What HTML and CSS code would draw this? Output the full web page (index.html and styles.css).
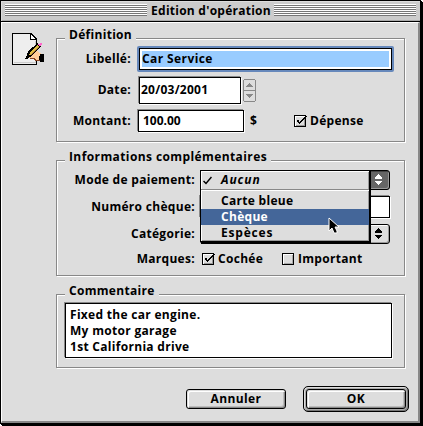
FILE: index.html
```html
<!DOCTYPE html>
<html lang="fr">
<head>
<meta charset="utf-8">
<title>Edition d'opération</title>
<link rel="stylesheet" href="styles.css">
</head>
<body>
<main class="window">
  <header class="titlebar"><i class="stripes"></i><h1>Edition d'opération</h1><i class="stripes"></i></header>
  <div class="content">
    <svg class="doc-icon" width="34" height="34" viewBox="0 0 34 34" shape-rendering="crispEdges">
      <path d="M0 0H19L25 6V32H0Z" fill="#000"/>
      <path d="M1 1H18V7H24V31H1Z" fill="#eee"/>
      <path d="M19 2L23 6H19Z" fill="#fff"/>
      <path d="M2 30H24V8H23V29H2Z" fill="#ccc"/>
      <path d="M19 18H25L27 20H29V27H23L20 26L15 24V21Z" fill="#fc9"/>
      <path d="M18 25H22L24 27H28V28H23L21 26H18Z" fill="#842"/>
      <path d="M28 21H32V29H28V27H27V23H28Z" fill="#000"/>
      <path d="M14 24.5L16 18.5L25.5 10L29.5 13.5L20 22.5L15.5 26Z" fill="#000"/>
      <path d="M17 22L18 19.5L25.5 12L27.5 13.5L19 21.5Z" fill="#db4"/>
      <path d="M18 22L27 13.5L27.5 14L20 21.5Z" fill="#963"/>
      <path d="M26 11H28V10H30V12H29V13H27V12H26Z" fill="#f6c"/>
      <path d="M13 25H14V24H15V23H16V25H15V26H13Z" fill="#000"/>
    </svg>
    <section class="group definition">
      <h2><span>Définition</span></h2>
      <div class="row row-name"><label>Libellé:</label><div class="focus"><div class="selected">Car Service</div></div></div>
      <div class="row row-date"><label>Date:</label><div class="field date">20/03/2001</div>
        <svg class="spinner" width="13" height="23" viewBox="0 0 13 23" shape-rendering="crispEdges"><path d="M1.5.5H11.5L12.5 1.5V21.5L11.5 22.5H1.5L.5 21.5V1.5ZM1 11.5H12" fill="none" stroke="#888"/><path d="M6 4H7V5H8V6H9V7H10V8H3V7H4V6H5V5H6ZM3 15H10V16H9V17H8V18H7V19H6V18H5V17H4V16H3Z" fill="#888"/></svg>
      </div>
      <div class="row row-amount"><label>Montant:</label><div class="field amount">100.00</div><span class="currency">$</span>
        <svg class="check" width="14" height="12" viewBox="0 0 14 12" shape-rendering="crispEdges"><path d="M.5.5H11.5V11.5H.5Z" fill="#ddd" stroke="#000"/><path d="M1 1H11V2H2V11H1Z" fill="#fff"/><path d="M10 2H11V11H2V10H10Z" fill="#999"/><path d="M3 5H5V7H6V6H7V5H8V4H9V3H10V2H11V1H13V2H12V3H11V4H10V5H9V6H8V7H7V8H6V9H5V8H4V7H3Z"/></svg><span class="check-label">Dépense</span>
      </div>
    </section>
    <section class="group details">
      <h2><span>Informations complémentaires</span></h2>
      <div class="row row-mode"><label>Mode de paiement:</label>
        <div class="popup dark"><svg width="7" height="12" viewBox="0 0 7 12" shape-rendering="crispEdges"><path d="M3 0H4V1H5V2H6V3H7V5H0V3H1V2H2V1H3ZM0 7H7V8H6V9H5V10H4V11H3V10H2V9H1V8H0Z"/></svg>
          <div class="menu">
            <div class="item current"><svg width="9" height="9" viewBox="0 0 9 9"><path d="M.5 5L3 7.5L8.5 1" fill="none" stroke="#000" stroke-width="1.5"/></svg><span>Aucun</span></div>
            <hr>
            <div class="item"><span>Carte bleue</span></div>
            <div class="item hover"><span>Chèque</span></div>
            <div class="item last"><span>Espèces</span></div>
            <svg class="cursor" width="13" height="18" viewBox="0 0 13 18"><path d="M1 1V14L4 11L6 16H9V14L7 10H11Z" stroke="#fff"/></svg>
          </div>
        </div>
      </div>
      <div class="row row-number"><label>Numéro chèque:</label><div class="field number"></div></div>
      <div class="row row-category"><label>Catégorie:</label><div class="popup"><svg width="7" height="12" viewBox="0 0 7 12" shape-rendering="crispEdges"><path d="M3 0H4V1H5V2H6V3H7V5H0V3H1V2H2V1H3ZM0 7H7V8H6V9H5V10H4V11H3V10H2V9H1V8H0Z"/></svg></div></div>
      <div class="row row-marks"><label>Marques:</label>
        <svg class="check" width="14" height="12" viewBox="0 0 14 12" shape-rendering="crispEdges"><path d="M.5.5H11.5V11.5H.5Z" fill="#ddd" stroke="#000"/><path d="M1 1H11V2H2V11H1Z" fill="#fff"/><path d="M10 2H11V11H2V10H10Z" fill="#999"/><path d="M3 5H5V7H6V6H7V5H8V4H9V3H10V2H11V1H13V2H12V3H11V4H10V5H9V6H8V7H7V8H6V9H5V8H4V7H3Z"/></svg><span class="check-label checked-label">Cochée</span>
        <svg class="check" width="14" height="12" viewBox="0 0 14 12" shape-rendering="crispEdges"><path d="M.5.5H11.5V11.5H.5Z" fill="#ddd" stroke="#000"/><path d="M1 1H11V2H2V11H1Z" fill="#fff"/><path d="M10 2H11V11H2V10H10Z" fill="#aaa"/></svg><span class="check-label">Important</span>
      </div>
    </section>
    <section class="group comment">
      <h2><span>Commentaire</span></h2>
      <div class="field notes"><p>Fixed the car engine.</p><p>My motor garage</p><p>1st California drive</p></div>
    </section>
    <footer class="actions"><button class="button">Annuler</button><div class="default"><button class="button">OK</button></div></footer>
  </div>
</main>
</body>
</html>
```
FILE: styles.css
```css
* { box-sizing: border-box; }
body { margin: 0; width: 423px; height: 426px; overflow: hidden; background: #fff; color: #000; font: 700 12px/16px "Open Sans", sans-serif; letter-spacing: .3px; white-space: nowrap; }
h1, h2, p { margin: 0; font: inherit; }
svg { display: block; flex: none; }
.window { width: 421px; height: 424px; border: 1px solid #000; background: #ddd; box-shadow: 1px 1px #000, 2px 2px #000; }
.titlebar { height: 21px; padding: 3px 4px 0; display: flex; background: #ccc; border-bottom: 1px solid #000; box-shadow: inset 1px 1px #ddd, inset 0 -1px #aaa; }
.titlebar h1 { width: 127px; text-align: center; margin-top: -1px; letter-spacing: .25px; padding-left: 1px; }
.stripes { flex: 1; height: 12px; background: repeating-linear-gradient(#fff 0 1px, #777 1px 2px); }
.content { height: 401px; display: grid; grid-template: 104px 116px 74px 1fr / 55px 349px; row-gap: 18px; padding-top: 15px; border: solid; border-width: 1px 2px 2px 1px; border-color: #fff #888 #888 #fff; }
.doc-icon { margin: -5px 0 0 10px; }
.group { grid-column: 2; border: 1px solid #888; box-shadow: inset 1px 1px #fff, 1px 1px #fff; display: flex; flex-direction: column; margin-left: -1px; width: 349px; }
.group h2 { margin: -12px 0 0 8px; height: 16px; flex: none; align-self: flex-start; background: #ddd; padding: 0 4px; }
.details h2 { letter-spacing: .4px; }
.row { display: flex; align-items: center; flex: none; }
.row label { text-align: right; flex: none; }
.definition label { width: 74px; }
.details label { width: 138px; }
.row-name { height: 26px; margin-top: 3px; }
.focus { margin-left: 6px; width: 257px; height: 26px; padding: 2px; background: #68b; border-radius: 2px; }
.selected { height: 22px; border: 1px solid #000; background: #9cf; box-shadow: inset 0 0 0 2px #fff; padding: 2px 0 0 2px; letter-spacing: .4px; }
.field { background: #fff; border: 1px solid #000; box-shadow: -1px -1px #888, 1px 1px #fff; }
.row-date { height: 27px; margin-top: 5px; }
.date { margin-left: 8px; width: 102px; height: 27px; padding: 4px 0 0 1px; letter-spacing: .25px; }
.row-date label { position: relative; top: -1px; }
.spinner { margin-left: 2px; }
.row-amount { height: 22px; margin-top: 6px; }
.amount { margin-left: 7px; width: 106px; height: 22px; padding: 2px 0 0 4px; letter-spacing: 0; }
.currency { width: 50px; padding-left: 6px; }
.check-label { margin-left: 2px; }
.row-mode { height: 20px; margin-top: 5px; }
.popup { position: relative; width: 190px; height: 20px; margin-left: 5px; border: 1px solid #000; border-radius: 3px; background: #ddd; padding: 3px 7px 0 0; box-shadow: inset 1px 1px #fff, inset -1px -1px #999; }
.popup > svg { margin-left: auto; }
.dark { background: #666; fill: #fff; box-shadow: inset 1px 1px #444, inset -1px -1px #999; }
.menu { position: absolute; z-index: 1; left: -1px; top: -1px; width: 170px; height: 72px; background: #ddd; border: 1px solid #000; box-shadow: inset 1px 1px #fff, inset -1px -1px #999, 1px 1px #000, 1px 2px #000; fill: #000; }
.menu hr { margin: 0; border: solid; border-width: 1px 0; border-color: #888 transparent #fff; }
.item { height: 16px; padding-left: 20px; }
.last { letter-spacing: .8px; }
.current { display: flex; align-items: center; height: 18px; padding-left: 2px; font-style: italic; letter-spacing: .9px; }
.current span { margin-left: 9px; }
hr + .item { margin-top: 2px; }
.hover { background: #469; color: #fff; }
.cursor { position: absolute; left: 127px; top: 46px; }
.row-number { height: 22px; margin-top: 6px; }
.number { width: 190px; height: 22px; margin-left: 5px; }
.row-category { height: 20px; margin-top: 6px; }
.row-marks { height: 16px; margin-top: 7px; }
.row-marks label { margin-right: 7px; }
.checked-label { width: 64px; }
.notes { margin: 4px 12px 0 8px; width: 327px; height: 55px; padding: 3px 0 0 4px; }
.actions { grid-column: 2; display: flex; justify-content: flex-end; height: 26px; gap: 17px; align-items: center; margin-right: -3px; }
.button { width: 100px; height: 20px; border: 1px solid #000; border-radius: 3px; background: #ddd; padding: 0; font: inherit; letter-spacing: .4px; box-shadow: inset 1px 1px #ddd, inset 2px 2px #fff, inset -1px -1px #888, inset -2px -2px #bbb; }
.default { padding: 2px; width: 106px; height: 26px; border: 1px solid #000; border-radius: 5px; background: #aaa; box-shadow: inset 1px 1px #ddd, inset -1px -1px #777; }
```
